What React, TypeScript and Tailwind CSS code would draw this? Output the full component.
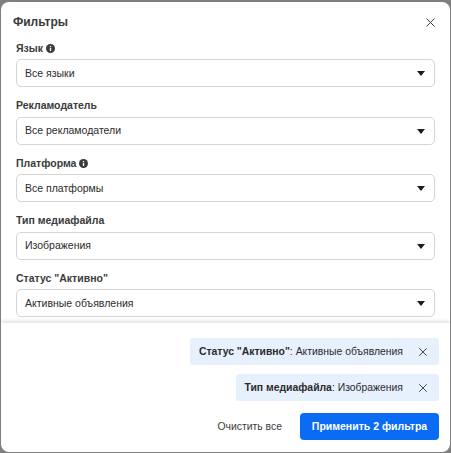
import { X } from "lucide-react";

const filters = [
  { label: "Язык", value: "Все языки", info: true },
  { label: "Рекламодатель", value: "Все рекламодатели", info: false },
  { label: "Платформа", value: "Все платформы", info: true },
  { label: "Тип медиафайла", value: "Изображения", info: false },
  { label: 'Статус "Активно"', value: "Активные объявления", info: false },
];

const chips = [
  { name: 'Статус "Активно"', value: "Активные объявления" },
  { name: "Тип медиафайла", value: "Изображения" },
];

function InfoDot() {
  return (
    <svg viewBox="0 0 16 16" className="h-[9px] w-[9px]">
      <circle cx="8" cy="8" r="8" fill="#3a3b3c" />
      <rect x="6.8" y="7" width="2.4" height="5.5" fill="#fff" />
      <rect x="6.8" y="3.6" width="2.4" height="2.2" fill="#fff" />
    </svg>
  );
}

export default function App() {
  return (
    <div className="h-[453px] w-[451px] bg-[#7f7f7f] pt-[2px] pb-px pl-px font-['Liberation_Sans',sans-serif]">
      <div className="flex h-[450px] w-[449px] flex-col overflow-hidden rounded-lg bg-white">
        <div className="flex h-[321px] flex-col px-[15px]">
          <div className="-ml-[3px] -mr-[3px] flex h-[39px] items-center justify-between">
            <h2 className="text-[12px] font-bold text-[#3a3b3c]">Фильтры</h2>
            <X className="mt-px h-[15px] w-[15px] text-[#3a3b3c]" strokeWidth={1.6} />
          </div>
          <div className="flex flex-col gap-[11.5px]">
            {filters.map((f) => (
              <div key={f.label} className="flex flex-col gap-[3px]">
                <div className="flex h-[15px] items-center gap-[3px] text-[10.5px] font-bold text-[#3a3b3c]">
                  {f.label}
                  {f.info && <InfoDot />}
                </div>
                <div className="flex h-[28px] items-center justify-between rounded-[5px] border border-[#d5d5d5] bg-white pt-px pr-[9px] pl-2 text-[10.5px] text-[#2b2b2b]">
                  {f.value}
                  <span className="h-0 w-0 border-x-[4px] border-t-[5px] border-x-transparent border-t-[#1c1c1c]" />
                </div>
              </div>
            ))}
          </div>
        </div>
        <div className="flex flex-1 flex-col items-end gap-[9px] pt-[15px] pr-[11px] shadow-[0_-2px_4px_rgba(0,0,0,0.12)]">
          {chips.map((c) => (
            <div
              key={c.name}
              className="flex h-[27px] items-center gap-[13px] rounded-[3px] bg-[#e7f0fd] pr-[9px] pl-[9px] text-[10.4px] text-[#2b2b2b]"
            >
              <span>
                <b>{c.name}</b>: {c.value}
              </span>
              <X className="h-[14px] w-[14px] text-[#3a3b3c]" strokeWidth={1.6} />
            </div>
          ))}
          <div className="mt-[3px] flex items-center gap-[18px]">
            <button type="button" className="text-[10.4px] text-[#3a3b3c]">
              Очистить все
            </button>
            <button
              type="button"
              className="h-[27px] w-[139px] rounded-[4px] bg-[#0a6cf5] text-[10.5px] font-bold text-white"
            >
              Применить 2 фильтра
            </button>
          </div>
        </div>
      </div>
    </div>
  );
}
